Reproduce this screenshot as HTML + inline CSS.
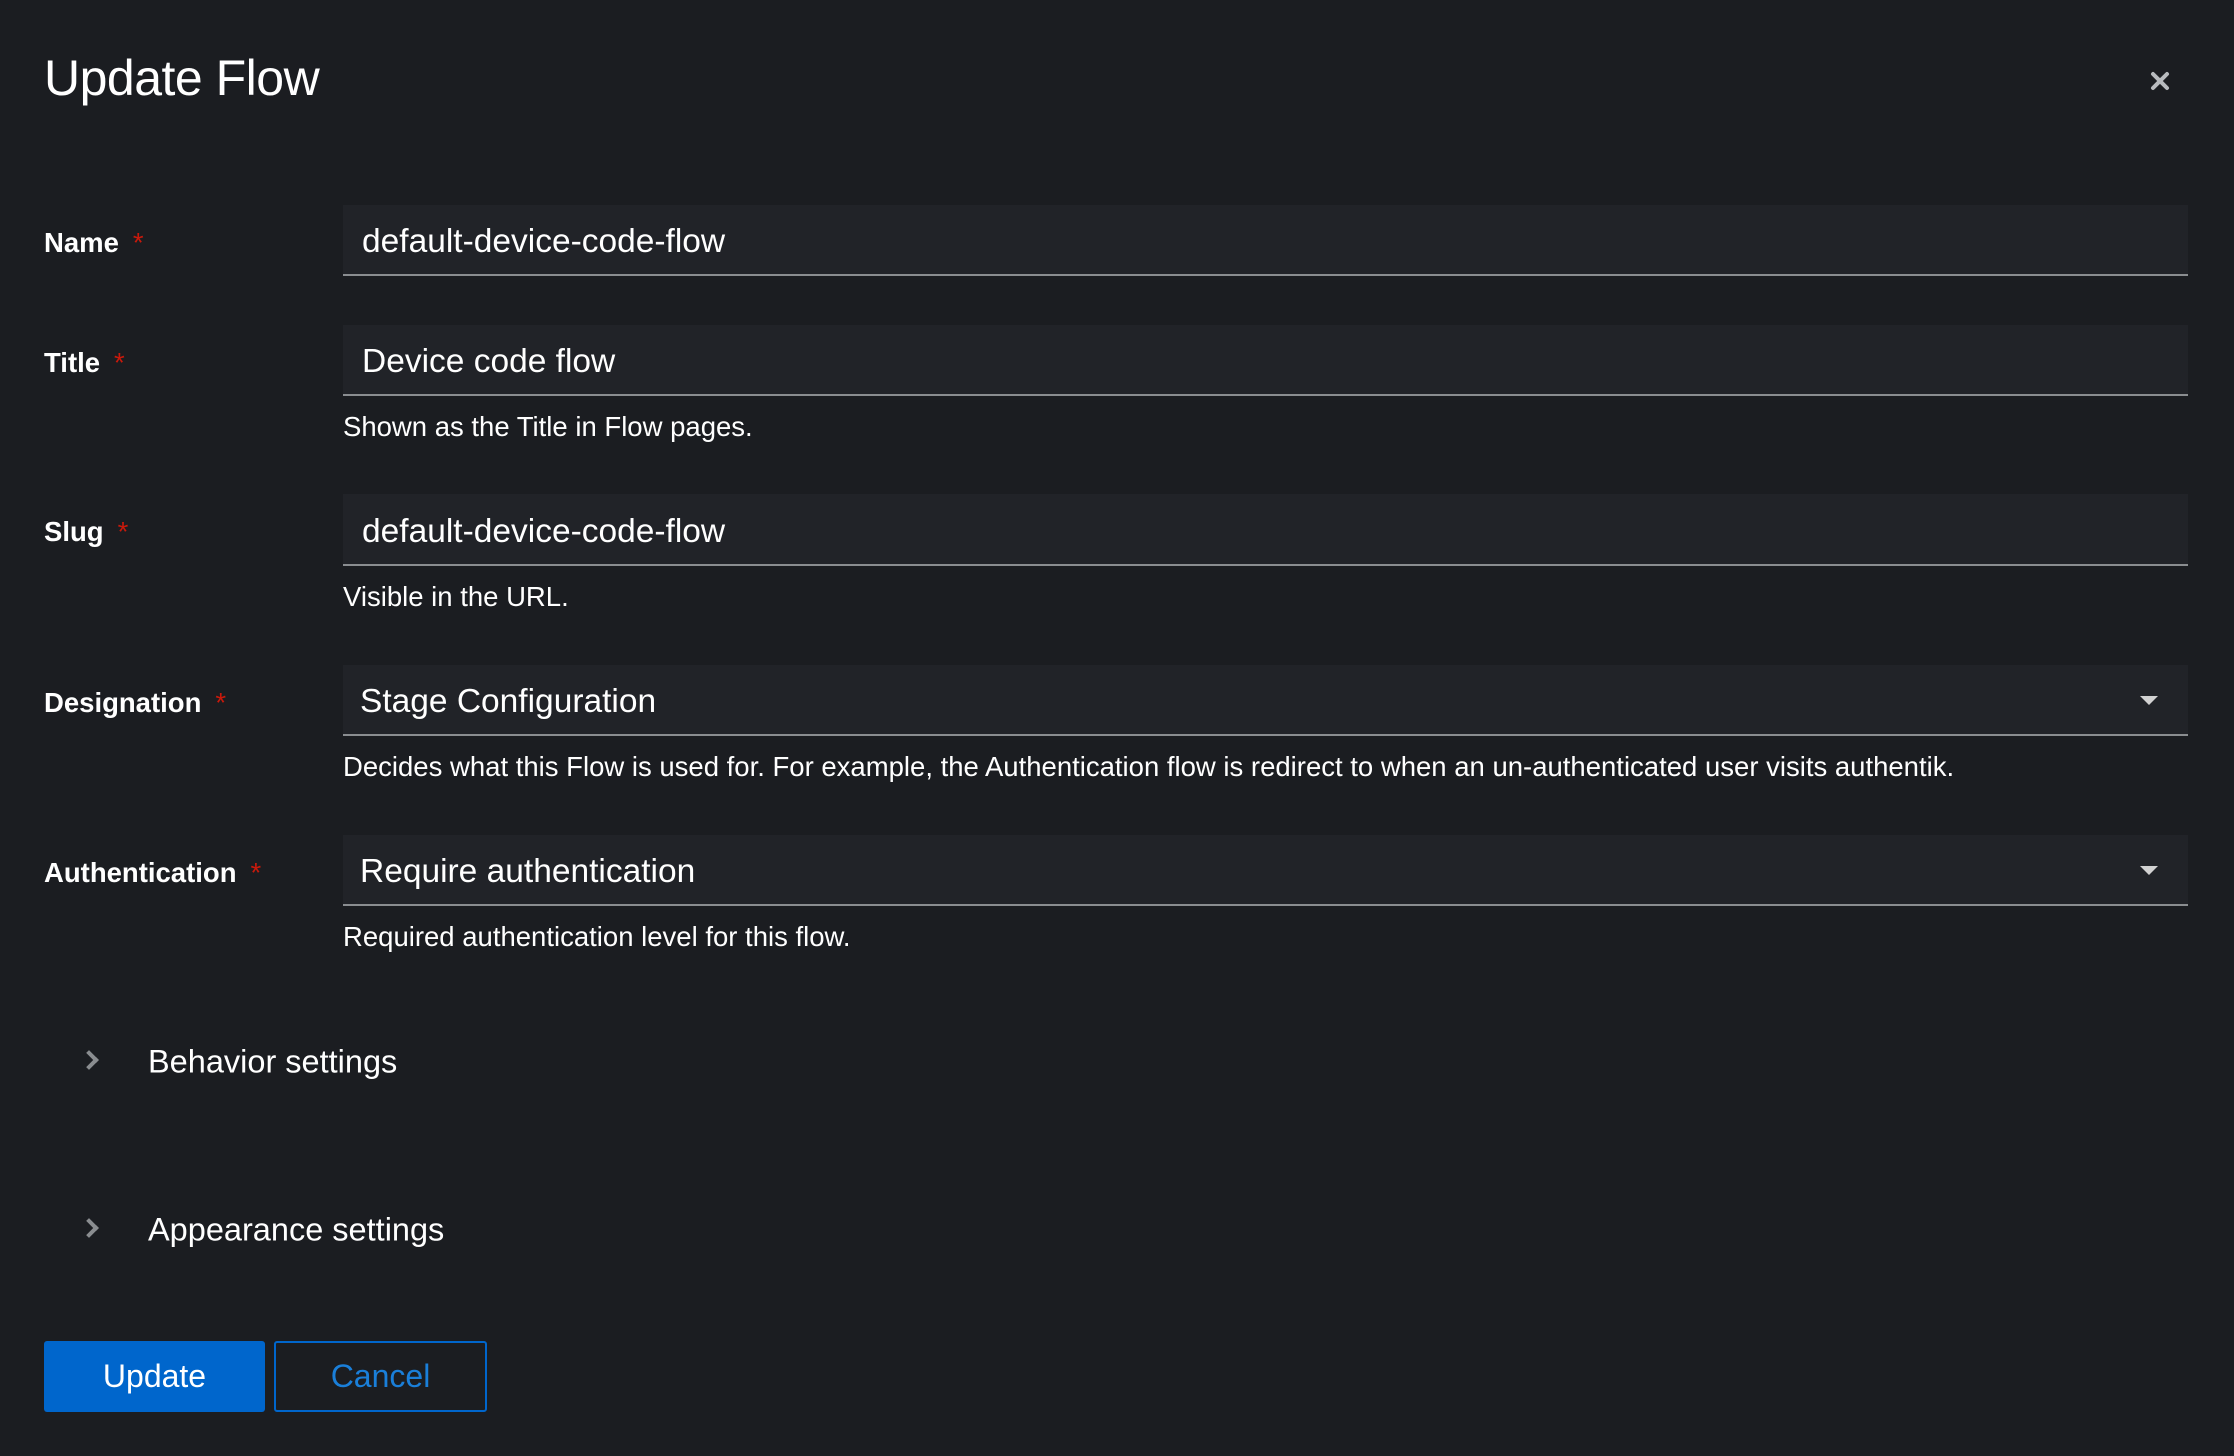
<!DOCTYPE html>
<html><head><meta charset="utf-8"><style>
*{margin:0;padding:0;box-sizing:border-box}
body{width:2234px;height:1456px;background:#1b1d21;color:#fff;font-family:"Liberation Sans",sans-serif;position:relative;overflow:hidden}
.a{position:absolute;white-space:nowrap}
h1{position:absolute;left:44px;top:49px;font-size:50px;font-weight:400;letter-spacing:-0.5px}
.lbl{position:absolute;left:44px;font-size:27.5px;font-weight:700;transform:translateY(-50%)}
.lbl span{color:#c9190b;font-weight:400;margin-left:14px}
.in{position:absolute;left:343px;width:1845px;background:#212328;border-bottom:2px solid #8a8d90;font-size:33.5px;padding-left:19px;padding-top:5px;display:flex;align-items:center}
.help{position:absolute;left:343px;font-size:27.5px;transform:translateY(-50%)}
.caret{position:absolute;right:30px;top:50%;margin-top:-4px;width:0;height:0;border-left:9px solid transparent;border-right:9px solid transparent;border-top:9px solid #d2d2d2}
.exp{position:absolute;left:148px;font-size:32.5px;transform:translateY(-50%)}
.chev{position:absolute;left:82px;width:14px;height:14px;border-right:4px solid #8a8d90;border-top:4px solid #8a8d90;transform:translateY(-50%) rotate(45deg)}
.btn{position:absolute;top:1341px;height:71px;font-size:32px;display:flex;align-items:center;justify-content:center;border-radius:3px}
</style></head><body>
<h1>Update Flow</h1>
<svg class="a" style="left:2150px;top:71px" width="20" height="20" viewBox="0 0 20 20"><path d="M3 3L17 17M17 3L3 17" stroke="#b8bbbe" stroke-width="4" stroke-linecap="round"/></svg>

<div class="lbl" style="top:243px">Name<span>*</span></div>
<div class="in" style="top:205px;height:71px">default-device-code-flow</div>

<div class="lbl" style="top:363px">Title<span>*</span></div>
<div class="in" style="top:325px;height:71px">Device code flow</div>
<div class="help" style="top:427px">Shown as the Title in Flow pages.</div>

<div class="lbl" style="top:532px">Slug<span>*</span></div>
<div class="in" style="top:494px;height:72px">default-device-code-flow</div>
<div class="help" style="top:597px">Visible in the URL.</div>

<div class="lbl" style="top:703px">Designation<span>*</span></div>
<div class="in" style="top:665px;height:71px;padding-left:17px">Stage Configuration<div class="caret"></div></div>
<div class="help" style="top:767px">Decides what this Flow is used for. For example, the Authentication flow is redirect to when an un-authenticated user visits authentik.</div>

<div class="lbl" style="top:873px">Authentication<span>*</span></div>
<div class="in" style="top:835px;height:71px;padding-left:17px">Require authentication<div class="caret"></div></div>
<div class="help" style="top:937px">Required authentication level for this flow.</div>

<div class="chev" style="top:1060px"></div>
<div class="exp" style="top:1062px">Behavior settings</div>
<div class="chev" style="top:1228px"></div>
<div class="exp" style="top:1230px">Appearance settings</div>

<div class="btn" style="left:44px;width:221px;background:#0066cc;color:#fff">Update</div>
<div class="btn" style="left:274px;width:213px;border:2px solid #0066cc;color:#1a7fd9">Cancel</div>
</body></html>
